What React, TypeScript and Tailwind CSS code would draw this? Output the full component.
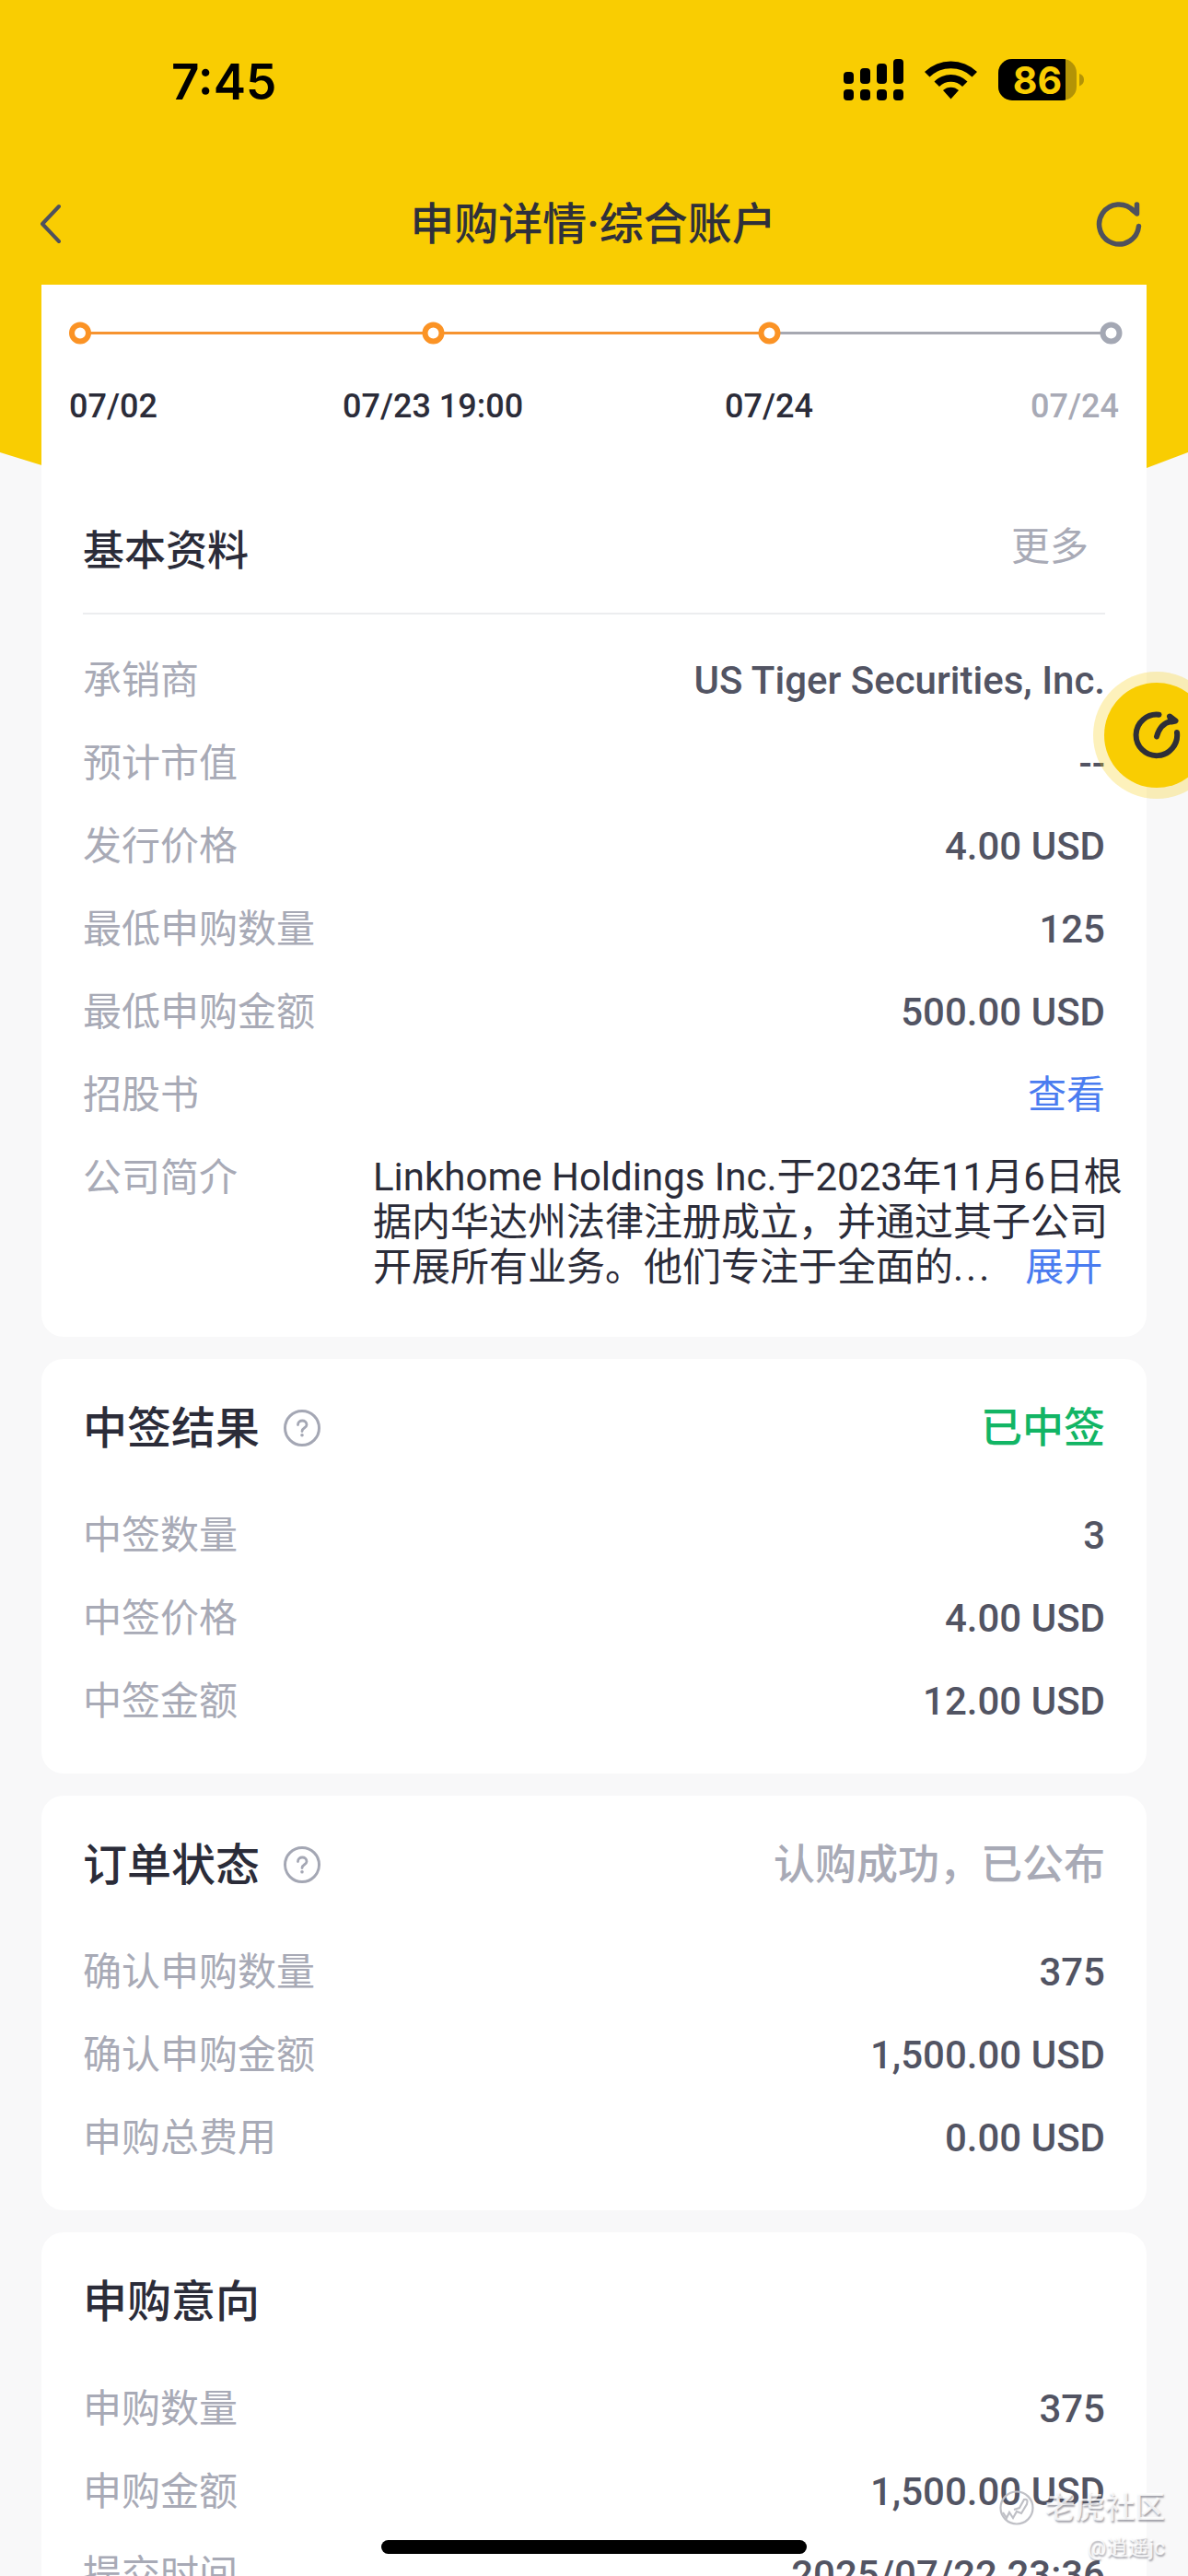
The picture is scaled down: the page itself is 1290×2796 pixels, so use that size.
import React from "react";

const CJK = "font-['Roboto','Noto_Sans_CJK_SC',sans-serif]";

type Item = { label: string; value: string; link?: boolean };

function StatusIcons() {
  return (
    <svg width="264" height="48" viewBox="0 0 264 48" className="mt-[-1px]">
      <rect x="2" y="15" width="11" height="13" rx="4" />
      <rect x="20" y="11" width="11" height="17" rx="4" />
      <rect x="38" y="6" width="11" height="22" rx="4" />
      <rect x="56" y="1" width="11" height="27" rx="4" />
      <rect x="2" y="34" width="11" height="12" rx="4" />
      <rect x="20" y="34" width="11" height="12" rx="4" />
      <rect x="38" y="34" width="11" height="12" rx="4" />
      <rect x="56" y="34" width="11" height="12" rx="4" />
      <path d="M90 15A41 41 0 0 1 147 15L141.500 20.500A33 33 0 0 0 95.500 20.500Z" />
      <path d="M100.500 25.500A25.500 25.500 0 0 1 136.500 25.500L131 31A17.500 17.500 0 0 0 106 31Z" />
      <path d="M110 35A12.500 12.500 0 0 1 127 35L118.500 44.500Z" />
      <clipPath id="battery">
        <rect x="170" y="1" width="85" height="45" rx="15" />
      </clipPath>
      <g clipPath="url(#battery)">
        <rect x="170" y="1" width="85" height="45" fill="#b39306" />
        <rect x="170" y="1" width="73" height="45" />
      </g>
      <path d="M258 17Q263 18.500 263 23.500T258 30.500Z" fill="#b39306" />
      <text x="212.500" y="38.500" textAnchor="middle" fill="#f9cd02" fontFamily="Inter" fontWeight="700" fontSize="41">86</text>
    </svg>
  );
}

function Timeline() {
  return (
    <svg width="1200" height="30" viewBox="45 346 1200 30">
      <path d="M87 361.500H835" stroke="#f6932f" strokeWidth="3" />
      <path d="M835 361.500H1206" stroke="#a6a8b1" strokeWidth="3" />
      <circle cx="87" cy="361.500" r="9" fill="#fff" stroke="#fb9325" strokeWidth="6" />
      <circle cx="470.500" cy="361.500" r="9" fill="#fff" stroke="#fb9325" strokeWidth="6" />
      <circle cx="835.500" cy="361.500" r="9" fill="#fff" stroke="#fb9325" strokeWidth="6" />
      <circle cx="1206.500" cy="361.500" r="9" fill="#fff" stroke="#a4a8b4" strokeWidth="6" />
    </svg>
  );
}

function Row({ label, value, link }: Item) {
  return (
    <div className="flex h-[90px] items-center justify-between text-[42px] leading-[60px]">
      <span className="text-[#a8aab6]">{label}</span>
      {link ? <span className="text-[#4a7cf0]">{value}</span> : <span className="font-medium text-[#525463]">{value}</span>}
    </div>
  );
}

function HelpIcon() {
  return (
    <svg width="42" height="42" viewBox="0 0 42 42" fill="none" stroke="#a4a7b4" className="mb-[2px] ml-[25px]">
      <circle cx="21" cy="21" r="18.500" strokeWidth="3" />
      <path d="M16.500 17.500C16.500 11.500 26 11.500 26 17.500C26 21 21 20.500 21 24.500" strokeWidth="2.800" strokeLinecap="round" />
      <circle cx="21" cy="28.800" r="1.800" fill="#a4a7b4" stroke="none" />
    </svg>
  );
}

function Card({ title, help, status, items }: { title: string; help?: boolean; status?: React.ReactNode; items: Item[] }) {
  return (
    <section className="mt-6 h-[450px] rounded-[24px] bg-white px-[45px] pt-[41px]">
      <div className="flex h-[70px] items-center">
        <h2 className="text-[48px] leading-[70px] font-medium text-[#2b2c39]">{title}</h2>
        {help && <HelpIcon />}
        <div className="ml-auto text-[45px] leading-[70px] font-medium">{status}</div>
      </div>
      <div className="pt-[36px]">
        {items.map((i) => (
          <Row key={i.label} {...i} />
        ))}
      </div>
    </section>
  );
}

const basics: Item[] = [
  { label: "承销商", value: "US Tiger Securities, Inc." },
  { label: "预计市值", value: "--" },
  { label: "发行价格", value: "4.00 USD" },
  { label: "最低申购数量", value: "125" },
  { label: "最低申购金额", value: "500.00 USD" },
  { label: "招股书", value: "查看", link: true },
];

export default function App() {
  return (
    <div className={`relative h-[2796px] w-[1290px] overflow-hidden bg-[#f8f8f9] ${CJK}`}>
      <svg width="1290" height="512" viewBox="0 0 1290 512" className="absolute top-0 left-0">
        <path d="M0 0H1290V491L1245 508H55L0 491Z" fill="#f9cd02" />
      </svg>

      <div className="relative">
        <div className="flex h-[176px] items-start justify-between pt-[64px] pr-[112px] pl-[186px]">
          <span className="font-['Inter',sans-serif] text-[53px] leading-[50px] font-semibold text-black">7:45</span>
          <StatusIcons />
        </div>
        <header className="flex h-[133px] items-center justify-between pr-[48px] pl-[42px]">
          <svg width="60" height="48" viewBox="0 0 60 48" fill="none" stroke="#4f515d" strokeWidth="4" strokeLinecap="round" strokeLinejoin="round">
            <path d="M22 5L4 24L22 43" />
          </svg>
          <h1 className="pt-[2px] text-[48px] leading-[70px] font-medium text-[#2f303a]">申购详情·综合账户</h1>
          <svg width="56" height="56" viewBox="0 0.500 56 56" fill="none" stroke="#4f515d" strokeWidth="5.500" strokeLinecap="round">
            <path d="M50.500 31A21.500 21.500 0 1 1 45 14.500" />
            <path d="M48.500 7.500V17.500L43.500 13" strokeLinejoin="round" />
          </svg>
        </header>

        <main className="mx-[45px]">
          <section className="h-[1142px] rounded-b-[24px] bg-white pt-[37px]">
            <Timeline />
            <div className="mt-[43px] grid h-[44px] grid-cols-[1fr_1fr_1fr_1fr] pr-[30px] pl-[30px] text-[36px] leading-[44px] font-medium text-[#2b2c39]">
              <span>07/02</span>
              <span className="ml-[12px]">07/23 19:00</span>
              <span className="ml-[142px]">07/24</span>
              <span className="text-right text-[#a8aab6]">07/24</span>
            </div>
            <div className="mx-[45px] mt-[65px] flex h-[139px] justify-between border-b-2 border-[#ecedef] pt-[36px]">
              <h2 className="text-[45px] leading-[70px] font-medium text-[#2b2c39]">基本资料</h2>
              <span className="pr-[18px] text-[42px] leading-[60px] text-[#a8aab6]">更多</span>
            </div>
            <div className="mx-[45px] pt-[27px]">
              {basics.map((i) => (
                <Row key={i.label} {...i} />
              ))}
              <div className="flex pt-[15px] text-[42px]">
                <span className="w-[315px] shrink-0 leading-[60px] text-[#a8aab6]">公司简介</span>
                <div className="pt-[4px] leading-[49px] whitespace-nowrap text-[#2b2c39]">
                  <p>Linkhome Holdings Inc.于2023年11月6日根</p>
                  <p>据内华达州法律注册成立，并通过其子公司</p>
                  <p>
                    开展所有业务。他们专注于全面的<span className="tracking-[3px]">...</span>
                    <span className="ml-[36px] text-[#4a7cf0]">展开</span>
                  </p>
                </div>
              </div>
            </div>
          </section>

          <Card
            title="中签结果"
            help
            status={<span className="text-[#12b565]">已中签</span>}
            items={[
              { label: "中签数量", value: "3" },
              { label: "中签价格", value: "4.00 USD" },
              { label: "中签金额", value: "12.00 USD" },
            ]}
          />
          <Card
            title="订单状态"
            help
            status={<span className="text-[#a8aab6]">认购成功，已公布</span>}
            items={[
              { label: "确认申购数量", value: "375" },
              { label: "确认申购金额", value: "1,500.00 USD" },
              { label: "申购总费用", value: "0.00 USD" },
            ]}
          />
          <Card
            title="申购意向"
            items={[
              { label: "申购数量", value: "375" },
              { label: "申购金额", value: "1,500.00 USD" },
              { label: "提交时间", value: "2025/07/22 23:36" },
            ]}
          />
        </main>
      </div>

      <svg width="104" height="140" viewBox="1186 728 104 140" className="absolute top-[728px] right-0">
        <circle cx="1256" cy="798" r="69" fill="#f9cd02" fillOpacity="0.27" />
        <circle cx="1256" cy="798" r="57" fill="#f9cd02" />
        <g fill="none" stroke="#2e2f38" strokeWidth="6" strokeLinecap="round" strokeLinejoin="round">
          <path d="M1258.500 775.700A22.300 22.300 0 1 0 1278 795" />
          <path d="M1256 799.500Q1260 785 1272 783M1270 777.500L1276.500 782.500L1272 783.500Z" />
        </g>
      </svg>

      <div className="absolute bottom-[24px] left-[414px] h-[15px] w-[462px] rounded-full bg-black" />

      <div className="absolute right-[25px] bottom-[9px] flex flex-col items-end text-white/80 [text-shadow:1px_2px_2px_rgba(80,80,95,0.55)]">
        <div className="flex items-center gap-[12px]">
          <svg width="38" height="42" viewBox="1 -1 38 42" fill="none" stroke="#bfc0c6" strokeWidth="2.200">
            <circle cx="20" cy="20" r="17.500" />
            <path d="M5 25L9 31L12 25L16 31L20 24L25 26L31 16Q33 10 28 11L23 20L17 22" />
          </svg>
          <span className="text-[32.500px] leading-[46px] font-medium">老虎社区</span>
        </div>
        <span className="text-[23px] leading-[42px]">@逍遥jc</span>
      </div>
    </div>
  );
}
